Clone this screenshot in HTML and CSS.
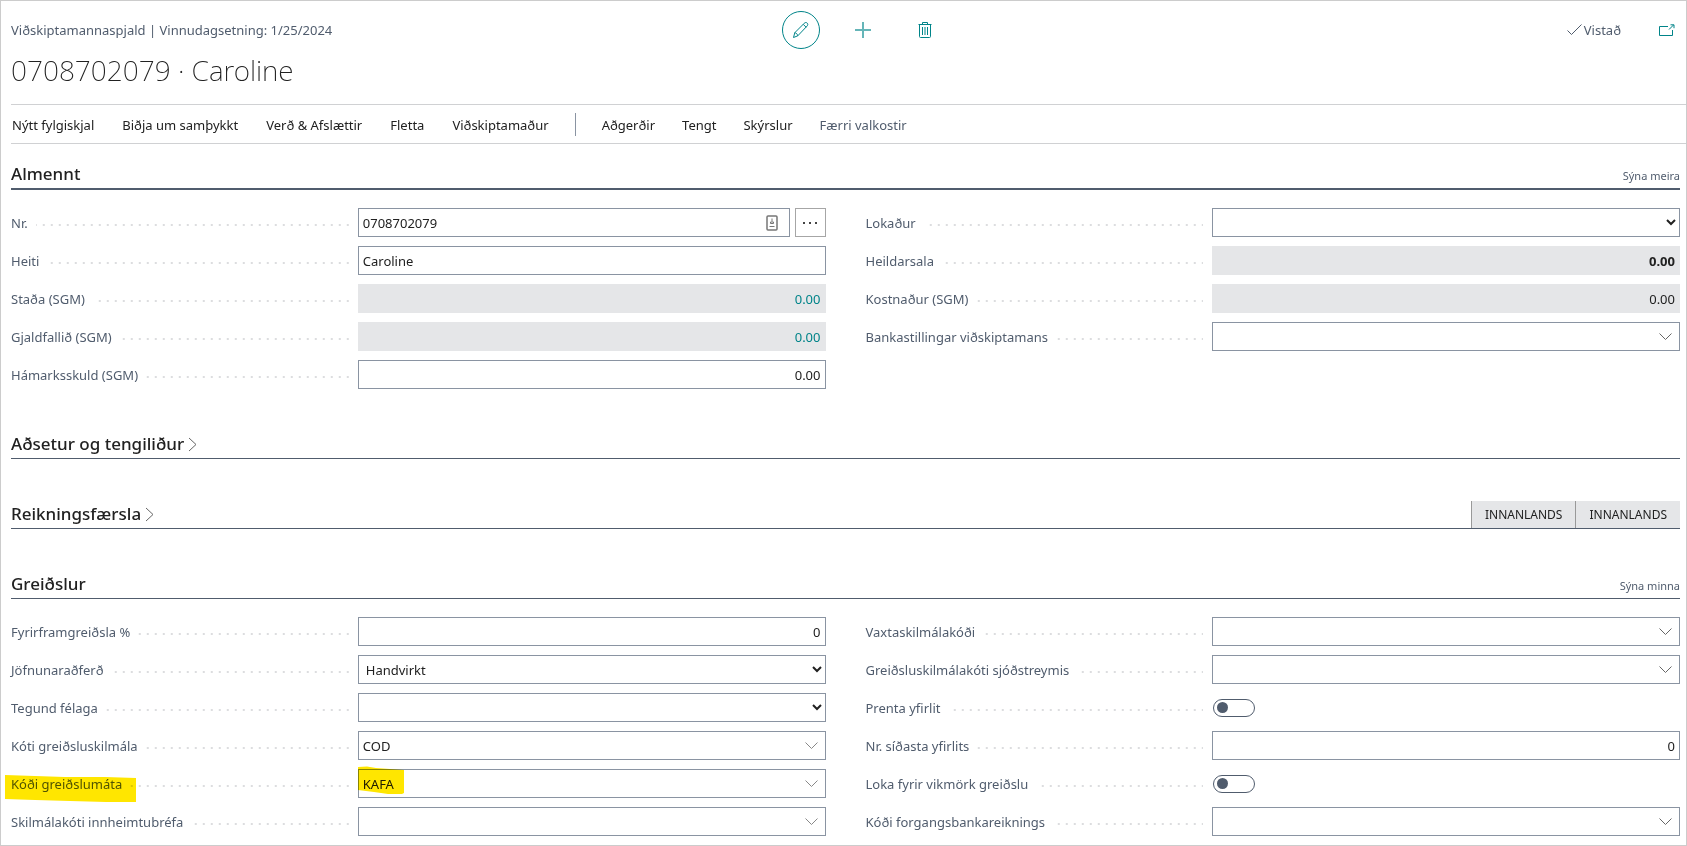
FILE: index.html
```html
<!DOCTYPE html>
<html lang="is">
<head>
<meta charset="utf-8">
<title>Viðskiptamannaspjald</title>
<meta name="viewport" content="width=device-width, initial-scale=1">
<link rel="stylesheet" href="styles.css">
</head>
<body>
<div class="page">
  <header class="topbar">
    <p class="caption">Viðskiptamannaspjald | Vinnudagsetning: 1/25/2024</p>
    <div class="tools">
      <button type="button" class="tool tool-active" aria-label="Breyta">
        <svg width="18" height="18" viewBox="0 0 18 18"><path d="M1.500 16.500l1.300-4.800L12.200 2.300c1-1 2.200-1 3 -.2s.8 2-.2 3L5.800 14.800zM2.800 11.700c1.500.2 2.700 1.500 3 3.100M11.200 3.300l3 3"/></svg>
      </button>
      <button type="button" class="tool" aria-label="Nýtt">
        <svg class="plus" width="18" height="18" viewBox="0 0 18 18"><path d="M9 1v16M1 9h16"/></svg>
      </button>
      <button type="button" class="tool" aria-label="Eyða">
        <svg width="18" height="18" viewBox="0 0 18 18"><path d="M2.500 3.500h13M6.500 3.500v-2h5v2M3.500 3.500v12q0 1 1 1h9q1 0 1-1v-12M6.500 6v8M9 6v8M11.500 6v8"/></svg>
      </button>
    </div>
    <div class="status">
      <span class="saved"><svg width="15" height="12" viewBox="0 0 15 12"><path d="M.5 6.500l4 4L14.500.5"/></svg>Vistað</span>
      <button type="button" class="popout" aria-label="Opna í nýjum glugga">
        <svg width="16" height="12" viewBox="0 0 16 12"><path d="M9 2.500H.5v9h13V6M10 5.500L14.500 1M11.500.8h3.500v3.400"/></svg>
      </button>
    </div>
  </header>
  <h1 class="title">0708702079 · Caroline</h1>
  <nav class="actions">
    <div class="actions-main">
      <button type="button">Nýtt fylgiskjal</button>
      <button type="button">Biðja um samþykkt</button>
      <button type="button">Verð &amp; Afslættir</button>
      <button type="button">Fletta</button>
      <button type="button">Viðskiptamaður</button>
    </div>
    <span class="divider"></span>
    <div class="actions-more">
      <button type="button">Aðgerðir</button>
      <button type="button">Tengt</button>
      <button type="button">Skýrslur</button>
      <button type="button" class="muted">Færri valkostir</button>
    </div>
  </nav>

  <section class="group">
    <div class="group-head group-head-focus">
      <h2>Almennt</h2>
      <button type="button" class="more">Sýna meira</button>
    </div>
    <div class="columns">
      <div class="column">
        <div class="row">
          <label for="nr"><span>Nr.</span></label>
          <div class="pair">
            <div class="box"><input id="nr" type="text" value="0708702079">
              <svg class="autofill" width="12" height="16" viewBox="0 0 12 16"><rect x="1" y="1" width="10" height="14" rx="1" stroke-width="1.500"/><path d="M6 3.500v3M4.500 8.500v-1.500h3v1.500zM3.500 11.500h5"/></svg>
            </div>
            <button type="button" class="assist" aria-label="Velja úr röð"><svg width="16" height="4" viewBox="0 0 16 4"><path d="M1 1h2v2H1zM7 1h2v2H7zM13 1h2v2h-2z"/></svg></button>
          </div>
        </div>
        <div class="row"><label for="heiti"><span>Heiti</span></label><div class="box"><input id="heiti" type="text" value="Caroline"></div></div>
        <div class="row"><label for="stada"><span>Staða (SGM)</span></label><div class="box readonly"><input id="stada" class="number link" type="text" value="0.00" readonly></div></div>
        <div class="row"><label for="gjald"><span>Gjaldfallið (SGM)</span></label><div class="box readonly"><input id="gjald" class="number link" type="text" value="0.00" readonly></div></div>
        <div class="row"><label for="hamark"><span>Hámarksskuld (SGM)</span></label><div class="box"><input id="hamark" class="number" type="text" value="0.00"></div></div>
      </div>
      <div class="column">
        <div class="row"><label for="lokadur"><span>Lokaður</span></label><select id="lokadur"><option></option></select></div>
        <div class="row"><label for="sala"><span>Heildarsala</span></label><div class="box readonly"><input id="sala" class="number strong" type="text" value="0.00" readonly></div></div>
        <div class="row"><label for="kostn"><span>Kostnaður (SGM)</span></label><div class="box readonly"><input id="kostn" class="number" type="text" value="0.00" readonly></div></div>
        <div class="row"><label for="banka"><span>Bankastillingar viðskiptamans</span></label><div class="box"><input id="banka" type="text"><button type="button" class="lookup" aria-label="Fletta upp"><svg width="13" height="8" viewBox="0 0 13 8"><path d="M.5.5l6 6 6-6"/></svg></button></div></div>
      </div>
    </div>
  </section>

  <section class="group">
    <div class="group-head">
      <h2><button type="button">Aðsetur og tengiliður<svg width="9" height="15" viewBox="0 0 9 15"><path d="M1 1l7 6.500L1 14"/></svg></button></h2>
    </div>
  </section>

  <section class="group">
    <div class="group-head">
      <h2><button type="button">Reikningsfærsla<svg width="9" height="15" viewBox="0 0 9 15"><path d="M1 1l7 6.500L1 14"/></svg></button></h2>
      <div class="chips"><span>INNANLANDS</span><span>INNANLANDS</span></div>
    </div>
  </section>

  <section class="group">
    <div class="group-head">
      <h2>Greiðslur</h2>
      <button type="button" class="more">Sýna minna</button>
    </div>
    <div class="columns">
      <div class="column">
        <div class="row"><label for="fyrir"><span>Fyrirframgreiðsla %</span></label><div class="box"><input id="fyrir" class="number" type="text" value="0"></div></div>
        <div class="row"><label for="jofn"><span>Jöfnunaraðferð</span></label><select id="jofn"><option>Handvirkt</option></select></div>
        <div class="row"><label for="tegund"><span>Tegund félaga</span></label><select id="tegund"><option></option></select></div>
        <div class="row"><label for="skilm"><span>Kóti greiðsluskilmála</span></label><div class="box"><input id="skilm" type="text" value="COD"><button type="button" class="lookup light" aria-label="Fletta upp"><svg width="13" height="8" viewBox="0 0 13 8"><path d="M.5.5l6 6 6-6"/></svg></button></div></div>
        <div class="row marked">
          <label for="mati"><span>Kóði greiðslumáta</span></label>
          <div class="box"><input id="mati" type="text" value="KAFA"><button type="button" class="lookup light" aria-label="Fletta upp"><svg width="13" height="8" viewBox="0 0 13 8"><path d="M.5.5l6 6 6-6"/></svg></button>
            <svg class="marker marker-value" width="47" height="30" viewBox="0 0 47 30"><path d="M0 1l9-.5L18 2l28 2v23l-2 1H30l-14-2L0 24z"/></svg>
          </div>
          <svg class="marker marker-label" width="131" height="28" viewBox="0 0 131 28"><path d="M0 0l30 1 30 1h40l31 1v24l-30 0-36-1-35-1-30-1z"/></svg>
        </div>
        <div class="row"><label for="innh"><span>Skilmálakóti innheimtubréfa</span></label><div class="box"><input id="innh" type="text"><button type="button" class="lookup light" aria-label="Fletta upp"><svg width="13" height="8" viewBox="0 0 13 8"><path d="M.5.5l6 6 6-6"/></svg></button></div></div>
      </div>
      <div class="column">
        <div class="row"><label for="vaxta"><span>Vaxtaskilmálakóði</span></label><div class="box"><input id="vaxta" type="text"><button type="button" class="lookup" aria-label="Fletta upp"><svg width="13" height="8" viewBox="0 0 13 8"><path d="M.5.5l6 6 6-6"/></svg></button></div></div>
        <div class="row"><label for="sjod"><span>Greiðsluskilmálakóti sjóðstreymis</span></label><div class="box"><input id="sjod" type="text"><button type="button" class="lookup" aria-label="Fletta upp"><svg width="13" height="8" viewBox="0 0 13 8"><path d="M.5.5l6 6 6-6"/></svg></button></div></div>
        <div class="row"><label for="prenta"><span>Prenta yfirlit</span></label><input id="prenta" class="switch" type="checkbox" role="switch"></div>
        <div class="row"><label for="sidasta"><span>Nr. síðasta yfirlits</span></label><div class="box"><input id="sidasta" class="number" type="text" value="0"></div></div>
        <div class="row"><label for="vikmork"><span>Loka fyrir vikmörk greiðslu</span></label><input id="vikmork" class="switch" type="checkbox" role="switch"></div>
        <div class="row"><label for="forgang"><span>Kóði forgangsbankareiknings</span></label><div class="box"><input id="forgang" type="text"><button type="button" class="lookup" aria-label="Fletta upp"><svg width="13" height="8" viewBox="0 0 13 8"><path d="M.5.5l6 6 6-6"/></svg></button></div></div>
      </div>
    </div>
  </section>
</div>
</body>
</html>
```

FILE: styles.css
```css
:root {
  --teal: #008489;
  --slate: #505c6d;
  --ink: #212121;
  --edge: #8a94a2;
  --rule: #d0d1d3;
  --fill: #e5e6e8;
}

* { box-sizing: border-box; }

body {
  margin: 0;
  background: #fff;
  color: var(--ink);
  font: 13px/20px "Noto Sans", "Open Sans", sans-serif;
}

button, input, select { font: inherit; color: inherit; }

button {
  padding: 0;
  border: 0;
  background: none;
  white-space: nowrap;
}

svg {
  display: block;
  flex: none;
  fill: none;
  stroke: currentColor;
}

.page {
  min-height: 100vh;
  padding: 0 6px 9px 10px;
  border: 1px solid #ccc;
}

.topbar {
  display: grid;
  grid-template-columns: 771fr auto 736fr;
  align-items: center;
  height: 38px;
  margin-top: 10px;
}

.caption { margin: 0; color: var(--slate); }

.tools {
  display: flex;
  gap: 24px;
  color: var(--teal);
}

.tool {
  display: grid;
  place-items: center;
  width: 38px;
  height: 38px;
  border-radius: 50%;
}

.tool-active { border: 1px solid var(--teal); }

.plus { stroke-width: 2; opacity: 0.6; }

.status {
  display: flex;
  align-items: center;
  justify-content: flex-end;
  gap: 38px;
  padding-right: 5px;
  color: var(--slate);
}

.saved { display: flex; align-items: center; gap: 2px; }
.popout { color: var(--teal); }

.title {
  margin: 1px 0 14px;
  font: 200 28px/40px "Noto Sans", "Open Sans", sans-serif;
}

.actions {
  display: flex;
  align-items: center;
  gap: 26px;
  height: 40px;
  margin-right: -6px;
  padding-left: 1px;
  border-top: 1px solid var(--rule);
  border-bottom: 1px solid var(--rule);
}

.actions-main, .actions-more { display: flex; padding-top: 1px; }
.actions-main { gap: 28px; }
.actions-more { gap: 27px; }

.divider {
  width: 1px;
  height: 23px;
  background: var(--edge);
}

.muted { color: var(--slate); }

.group { margin-bottom: 39px; }
.group:last-child { margin-bottom: 0; }

.group-head {
  display: flex;
  align-items: flex-end;
  justify-content: space-between;
  height: 31px;
  border-bottom: 1px solid var(--slate);
}

.group-head-focus {
  height: 46px;
  border-bottom-width: 2px;
}

.group-head h2 {
  margin: 0 0 2px;
  font-size: 17px;
  font-weight: 500;
  line-height: 24px;
}

.group-head h2 button {
  display: flex;
  align-items: center;
  gap: 4px;
}

.group-head h2 svg { color: #666; }

.more {
  margin-bottom: 2px;
  font-size: 11px;
  color: var(--slate);
}

.chips { display: flex; }

.chips span {
  padding: 0 13px;
  border-left: 1px solid #999;
  background: var(--fill);
  font-size: 12px;
  line-height: 27px;
}

.columns {
  display: grid;
  grid-template-columns: 1fr 1fr;
  gap: 40px;
  padding-top: 18px;
}

.column {
  display: grid;
  align-content: start;
  gap: 9px;
}

.row {
  display: grid;
  grid-template-columns: 347fr 468fr;
  align-items: center;
  height: 29px;
}

.row label {
  display: block;
  margin-right: 9px;
  color: var(--slate);
  background: linear-gradient(90deg, transparent 6px, #dcdddf 6px) right 11px / 8px 2px repeat-x;
}

.row label span {
  display: inline-block;
  padding-right: 8px;
  background: #fff;
}

.box {
  display: flex;
  align-items: center;
  min-width: 0;
  height: 29px;
  border: 1px solid var(--edge);
}

.box input {
  flex: 1;
  min-width: 0;
  height: 100%;
  padding: 0 4px;
  border: 0;
  background: none;
}

.readonly { border-color: var(--fill); background: var(--fill); }
.number { text-align: right; }
.link { color: var(--teal); }
.strong { font-weight: 700; }

.pair {
  display: grid;
  grid-template-columns: 1fr 31px;
  gap: 5px;
}

.autofill { margin-right: 11px; color: #777; }

.assist {
  display: grid;
  place-items: center;
  border: 1px solid #a6a6a6;
}

.assist svg { fill: #444; stroke: none; }

.lookup { padding: 0 7px; color: #666; }
.light { color: #888; }

select {
  width: 100%;
  height: 29px;
  padding: 0 3px;
  border: 1px solid var(--edge);
  border-radius: 0;
  background: #fff;
}

.switch {
  display: grid;
  align-items: center;
  width: 42px;
  height: 18px;
  margin: 0 0 0 1px;
  padding: 0 3px;
  border: 1px solid var(--slate);
  border-radius: 9px;
  appearance: none;
}

.switch::before {
  content: "";
  width: 11px;
  height: 11px;
  border-radius: 50%;
  background: var(--slate);
}

.switch:checked::before { justify-self: end; }

.marked, .marked .box { position: relative; }

.marker {
  position: absolute;
  fill: #ffe600;
  stroke: none;
  mix-blend-mode: multiply;
  pointer-events: none;
}

.marker-label { left: -6px; top: 6px; }
.marker-value { left: -1px; top: -4px; }
```
